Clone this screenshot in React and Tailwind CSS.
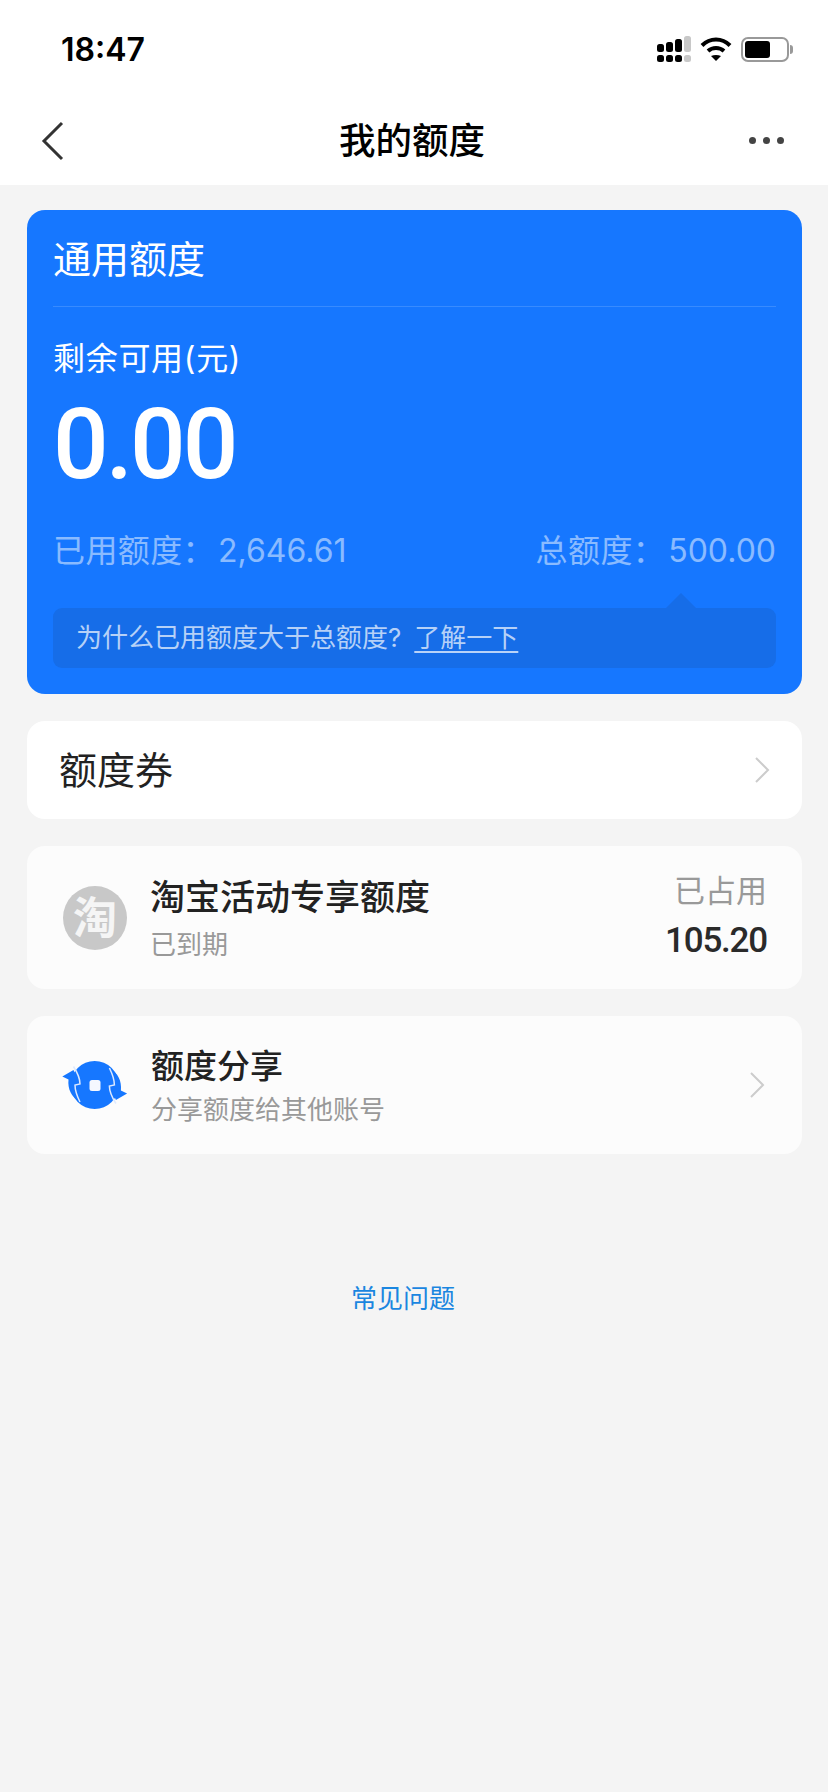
const CJK = "font-['Inter','Noto_Sans_CJK_SC',sans-serif]";

function StatusBar() {
  return (
    <div className="flex h-[86px] items-start justify-between pl-[61px] pr-[35px] pt-[30px]">
      <span className="font-['Inter',sans-serif] text-[32px] font-semibold leading-[40px] text-black">18:47</span>
      <div className="mt-[6px] flex items-center gap-[9px]">
        <svg width="34" height="26" viewBox="0 0 34 26" fill="#000">
          <rect x="0" y="8" width="7" height="8" rx="2.5" />
          <rect x="9" y="6" width="7" height="10" rx="2.5" />
          <rect x="18" y="3" width="7" height="13" rx="2.5" />
          <rect x="27" y="0" width="7" height="16" rx="2.5" fill="#c8c8c8" />
          <rect x="0" y="19" width="7" height="7" rx="2.5" />
          <rect x="9" y="19" width="7" height="7" rx="2.5" />
          <rect x="18" y="19" width="7" height="7" rx="2.5" />
          <rect x="27" y="19" width="7" height="7" rx="2.5" fill="#c8c8c8" />
        </svg>
        <svg width="32" height="26" viewBox="0 0 32 26" fill="none" stroke="#000" strokeWidth="4">
          <path d="M2 9.500C10 1.500 22 1.500 30 9.500" />
          <path d="M8 15C12.500 11 19.500 11 24 15" />
          <path d="M11 20L16 25L21 20C18 18.500 14 18.500 11 20Z" fill="#000" stroke="none" />
        </svg>
        <div className="flex items-center">
          <div className="flex h-[25px] w-[48px] items-center rounded-[7px] border-2 border-[#999999] p-[2px]">
            <div className="h-full w-[25px] rounded-[3px] bg-black" />
          </div>
          <div className="ml-[1px] h-[9px] w-[3px] rounded-r-full bg-[#999999]" />
        </div>
      </div>
    </div>
  );
}

function NavBar() {
  return (
    <div className="flex h-[99px] items-center pl-[40px] pr-[42px] pt-[10px]">
      <div className="flex-1">
        <svg width="24" height="40" viewBox="0 0 24 40" fill="none" stroke="#333333" strokeWidth="3">
          <path d="M22 2L4 20L22 38" />
        </svg>
      </div>
      <span className="text-[36.500px] font-medium leading-[48px] text-black">我的额度</span>
      <div className="flex flex-1 justify-end gap-[7px] pr-[2px]">
        <span className="h-[7px] w-[7px] rounded-full bg-[#444444]" />
        <span className="h-[7px] w-[7px] rounded-full bg-[#444444]" />
        <span className="h-[7px] w-[7px] rounded-full bg-[#444444]" />
      </div>
    </div>
  );
}

function QuotaCard() {
  return (
    <div className="flex h-[484px] flex-col rounded-[18px] bg-[#1677ff] px-[26px] pt-[24px] text-white">
      <div className="h-[73px] border-b border-white/15 text-[38px] leading-[50px]">通用额度</div>
      <div className="mt-[31px] text-[32px] leading-[42px] tracking-[0.7px]">剩余可用(元)</div>
      <div className="mt-[13px] font-['Roboto',sans-serif] text-[98px] font-medium leading-[104px] tracking-[-3px]">0.00</div>
      <div className="mt-[33px] flex justify-between text-[32px] leading-[42px] text-white/50">
        <span>
          <span className="tracking-[0.4px]">已用额度：</span>
          <span className="ml-[3px]">2,646.61</span>
        </span>
        <span>
          <span className="tracking-[0.4px]">总额度：</span>
          <span className="ml-[3px]">500.00</span>
        </span>
      </div>
      <div className="relative mt-[36px] flex h-[60px] items-center rounded-[9px] bg-[#166de8] px-[23px] pb-[2px] text-[26px] text-white/70">
        <span className="absolute right-[80px] top-[-15px] h-0 w-0 border-x-[15px] border-b-[15px] border-x-transparent border-b-[#166de8]" />
        <span>为什么已用额度大于总额度?</span>
        <span className="ml-[13px] underline underline-offset-4">了解一下</span>
      </div>
    </div>
  );
}

function Chevron() {
  return (
    <svg width="16" height="26" viewBox="0 0 16 26" fill="none" stroke="#cccccc" strokeWidth="2">
      <path d="M2 1L14 13L2 25" />
    </svg>
  );
}

function TaobaoIcon() {
  return (
    <div className="flex h-[64px] w-[64px] items-center justify-center rounded-full bg-[#c8c8c8] text-[44px] font-bold leading-none text-[#f5f5f5]">淘</div>
  );
}

function ShareArrow({ transform }) {
  return (
    <g transform={transform}>
      <path d="M4.300 21.500L15.500 15L21.500 29L16.500 30C16.500 35 18 41 21 46C13.500 42 9.500 34 10.500 24.500Z" fill="#1677ff" />
      <path d="M15.500 11.500C19 17 22 23 22 29L17 30C17 35 19 41 22 47" fill="none" stroke="#dce9ff" strokeWidth="1.500" />
    </g>
  );
}

function ShareIcon() {
  return (
    <svg width="74" height="60" viewBox="0 0 74 60">
      <circle cx="36.700" cy="30" r="24" fill="#1677ff" />
      <ShareArrow />
      <ShareArrow transform="rotate(180 36.700 30)" />
      <rect x="31.500" y="25" width="11" height="11" rx="2.500" fill="#f5f8ff" />
    </svg>
  );
}

export default function App() {
  return (
    <div className={`flex min-h-[1792px] w-[828px] flex-col bg-[#f4f4f4] ${CJK}`}>
      <div className="bg-white">
        <StatusBar />
        <NavBar />
      </div>
      <main className="flex flex-col gap-[27px] pl-[27px] pr-[26px] pt-[25px]">
        <QuotaCard />
        <div className="flex h-[98px] items-center justify-between rounded-[18px] bg-white px-[32px]">
          <span className="text-[38px] leading-[48px] text-[#222222]">额度券</span>
          <Chevron />
        </div>
        <div className="flex h-[143px] items-center rounded-[18px] bg-[#fcfcfc] pl-[36px] pr-[36px]">
          <TaobaoIcon />
          <div className="ml-[23px] flex-1">
            <div className="text-[35px] font-medium leading-[46px] text-[#222222]">淘宝活动专享额度</div>
            <div className="mt-[8px] text-[26px] leading-[34px] text-[#999999]">已到期</div>
          </div>
          <div className="-mr-[1px] -translate-y-[2px] text-right">
            <div className="text-[31px] leading-[40px] text-[#999999]">已占用</div>
            <div className="mt-[10px] font-['Roboto',sans-serif] text-[35px] font-medium leading-[40px] tracking-[-1.200px] text-[#2a2a2a]">105.20</div>
          </div>
        </div>
        <div className="flex h-[138px] items-center rounded-[18px] bg-[#fcfcfc] pl-[31px] pr-[37px]">
          <ShareIcon />
          <div className="ml-[19px] flex-1 translate-y-[1px]">
            <div className="text-[33px] font-medium leading-[42px] text-[#222222]">额度分享</div>
            <div className="mt-[6px] text-[26px] leading-[34px] text-[#999999]">分享额度给其他账号</div>
          </div>
          <Chevron />
        </div>
      </main>
      <div className="mt-[127px] pr-[22px] text-center text-[26px] leading-[36px] text-[#1a86e0]">常见问题</div>
    </div>
  );
}
